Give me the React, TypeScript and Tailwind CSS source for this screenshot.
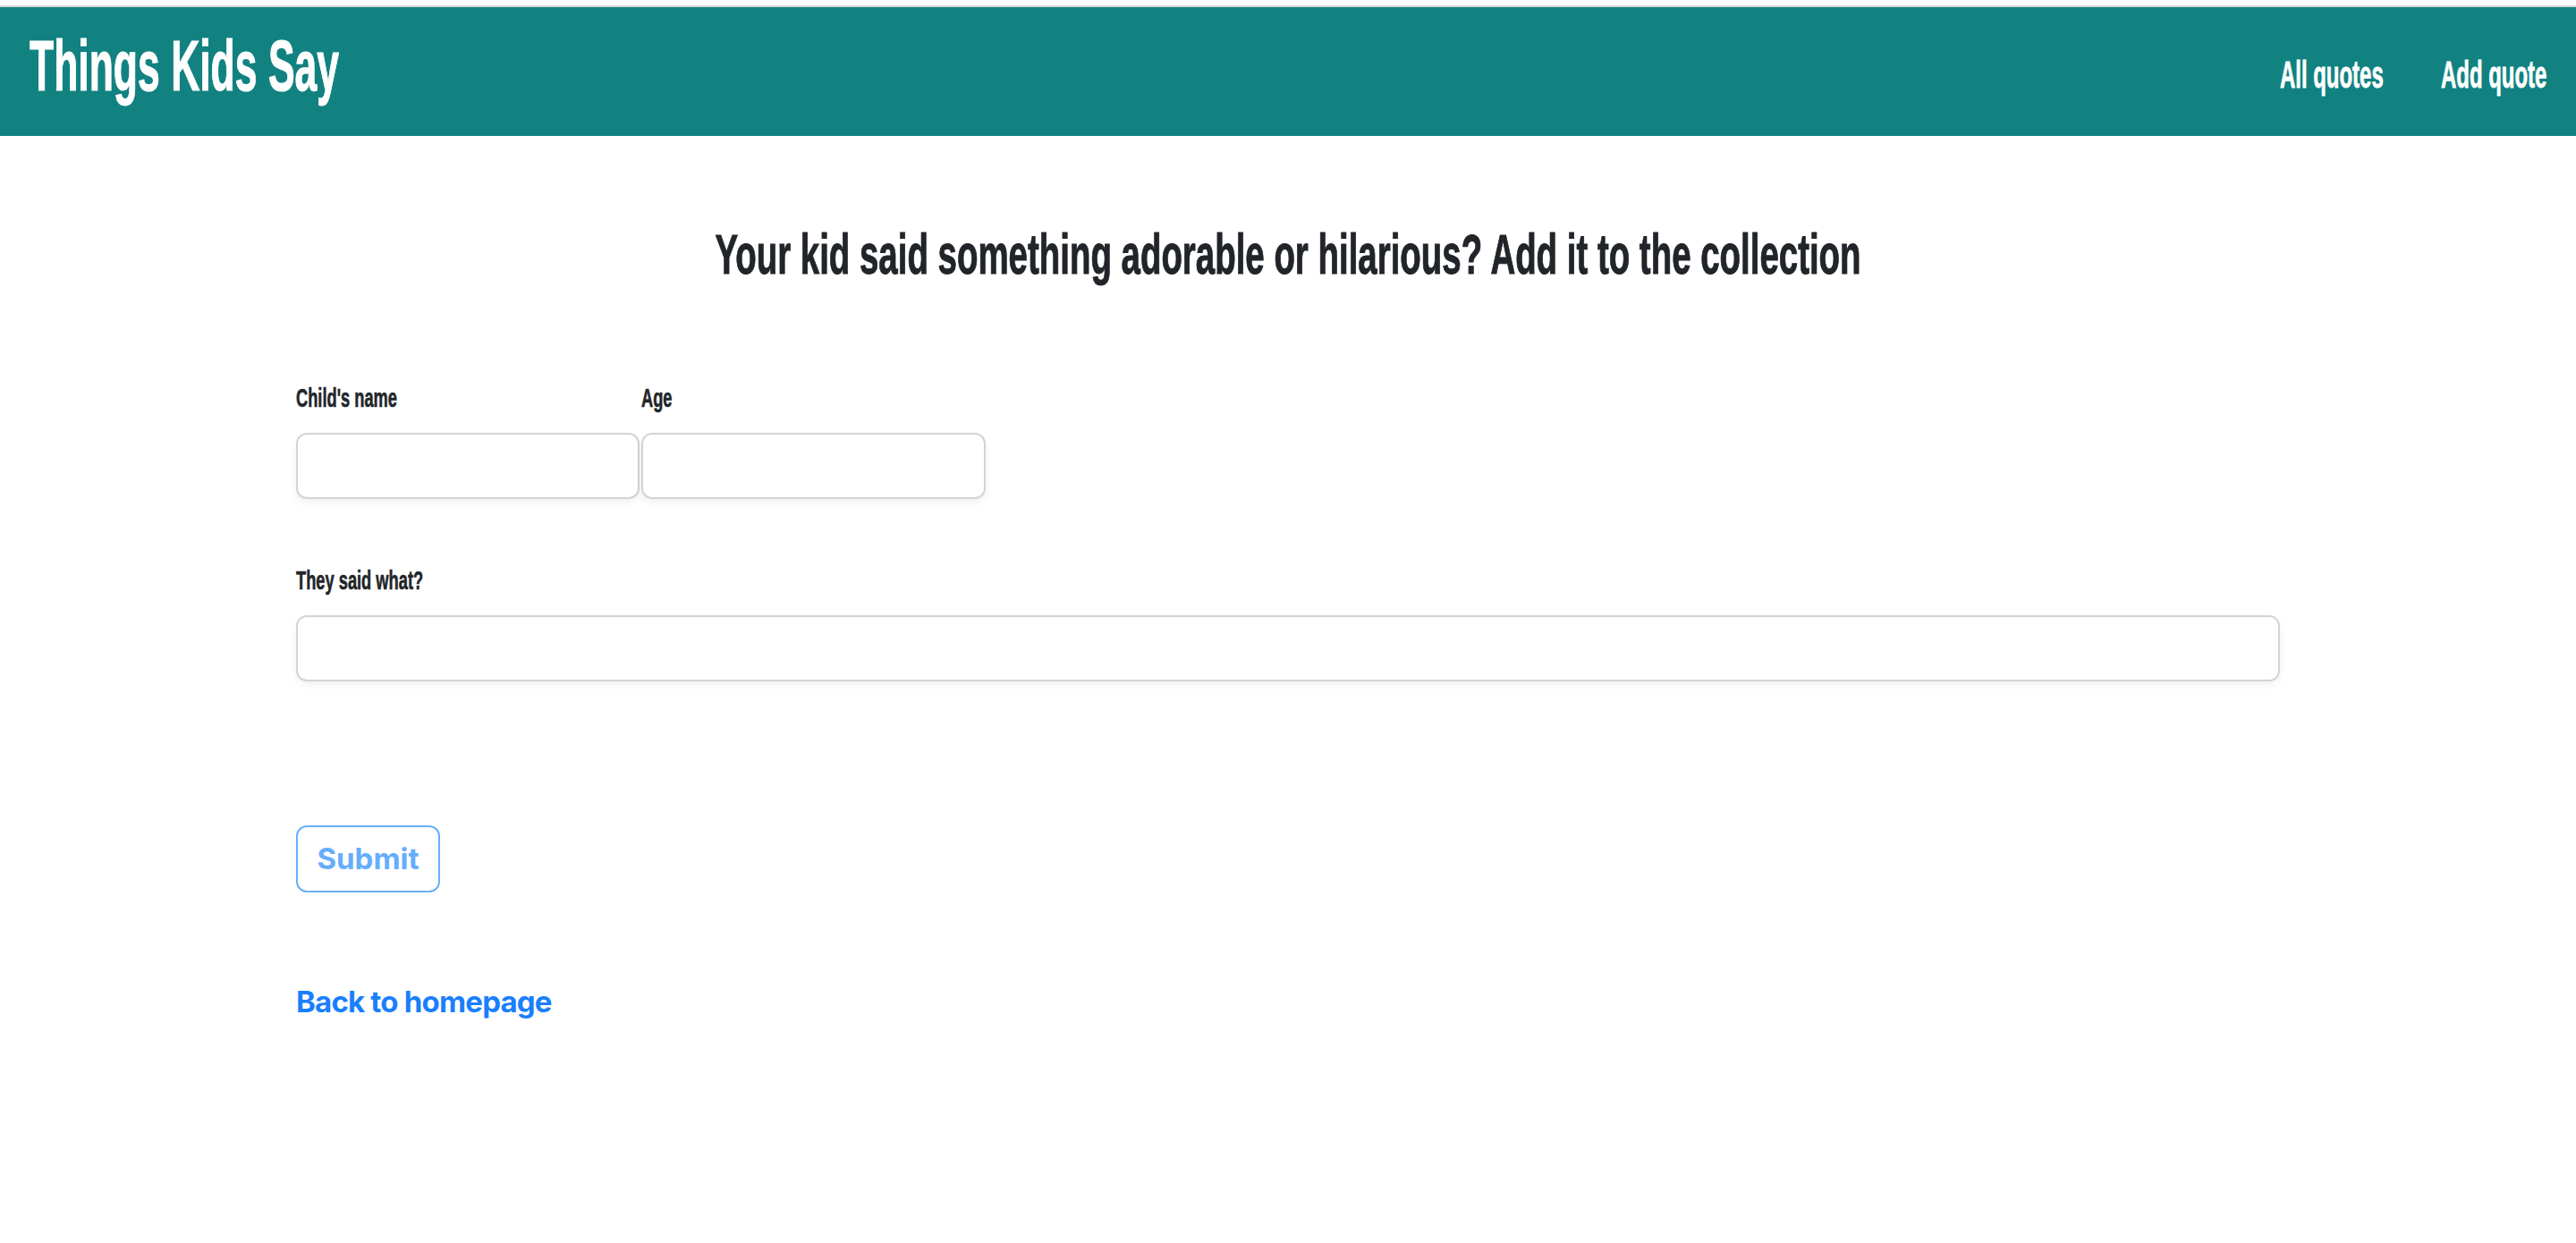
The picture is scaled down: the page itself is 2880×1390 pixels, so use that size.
const display = "font-['Liberation_Sans',sans-serif] font-bold whitespace-nowrap";

function NavLink({ label, width }: { label: string; width: string }) {
  return (
    <a href="#" className={`block ${width}`}>
      <span className={`${display} block text-[42px] leading-none text-white origin-left scale-x-[0.57] [-webkit-text-stroke:0.8px_white]`}>
        {label}
      </span>
    </a>
  );
}

function Field({ label, width }: { label: string; width: string }) {
  return (
    <div className={`flex flex-col ${width}`}>
      <label className={`${display} block text-[29px] leading-none text-[#212529] origin-left scale-x-[0.63] h-[29px] [-webkit-text-stroke:0.6px_#212529]`}>
        {label}
      </label>
      <input
        type="text"
        className="mt-[24px] h-[74px] w-full rounded-[12px] border-2 border-[#d0d4da] bg-white shadow-[0_4px_8px_rgba(0,0,0,0.06)] outline-none"
      />
    </div>
  );
}

export default function App() {
  return (
    <div className="min-h-[1390px] bg-white">
      <div className="h-[6px] bg-white" />
      <header className="h-[146px] border-t-2 border-[#d3d6d6] bg-[#128281] flex items-start justify-between pl-[33px] pr-[33px]">
        <a href="#" className={`${display} mt-[26px] text-[80px] leading-none text-white inline-block origin-left scale-x-[0.556] [-webkit-text-stroke:1.2px_white]`}>
          Things Kids Say
        </a>
        <nav className="mt-[55px] flex gap-[65px]">
          <NavLink label="All quotes" width="w-[115px]" />
          <NavLink label="Add quote" width="w-[118px]" />
        </nav>
      </header>

      <main className="mx-auto w-[2218px]">
        <h1 className={`${display} mt-[101px] text-center text-[63px] leading-none text-[#212529] scale-x-[0.61] [-webkit-text-stroke:1px_#212529]`}>
          Your kid said something adorable or hilarious? Add it to the collection
        </h1>

        <form className="mt-[115px]">
          <div className="flex gap-[2px]">
            <Field label="Child's name" width="w-[384px]" />
            <Field label="Age" width="w-[385px]" />
          </div>

          <div className="mt-[77px]">
            <Field label="They said what?" width="w-full" />
          </div>

          <button
            type="submit"
            disabled
            className="mt-[161px] h-[75px] w-[161px] rounded-[12px] border-2 border-[#6aaffc] bg-white font-['Inter',sans-serif] text-[33px] font-bold text-[#66adfc]"
          >
            Submit
          </button>
        </form>

        <a href="#" className="mt-[106px] inline-block font-['Inter',sans-serif] text-[33px] font-bold leading-none tracking-[-0.8px] text-[#1a7ffb]">
          Back to homepage
        </a>
      </main>
    </div>
  );
}
